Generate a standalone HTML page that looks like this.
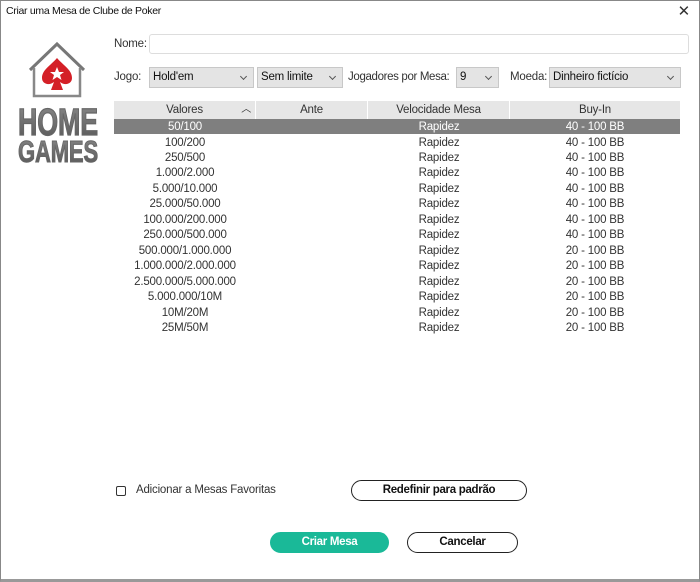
<!DOCTYPE html>
<html><head><style>
*{box-sizing:border-box;margin:0;padding:0}
body{width:700px;height:582px;background:#fff;font-family:"Liberation Sans",sans-serif;font-size:11.5px;letter-spacing:-0.2px;color:#222;position:relative;overflow:hidden}
.frame{position:absolute;left:0;top:0;width:700px;height:582px;border:1px solid #888;border-bottom:3px solid #999}
.abs{position:absolute}
.title{left:6px;top:5px;font-size:10.5px;color:#111;letter-spacing:-0.3px}
.close{right:10px;top:2px;font-size:15px;color:#333}
.lbl{font-size:11.5px;color:#333}
.sel{position:absolute;height:21px;background:#e4e4e4;border:1px solid #c8c8c8;font-size:11.5px;padding:3px 3px;color:#111}
.sel:after{content:"";position:absolute;right:7px;top:6px;width:4px;height:4px;border-right:1px solid #555;border-bottom:1px solid #555;transform:rotate(45deg)}
.hdr{position:absolute;top:101px;height:18px;background:#e6e6e6;text-align:center;font-size:11.5px;line-height:18px;color:#333;border-right:1px solid #fff}
.row{position:absolute;left:114px;width:566px;height:15.45px;font-size:11.5px;line-height:16px;color:#333}
.row span{position:absolute;text-align:center}
.c1{left:0;width:142px}.c3{left:254px;width:142px}.c4{left:396px;width:170px}
.sel0{background:#7f7f7f;color:#fff}
.btn{position:absolute;height:21px;border:1px solid #222;border-radius:11px;text-align:center;font-weight:bold;font-size:11.5px;line-height:19px;color:#111;background:#fff;letter-spacing:-0.3px}
</style></head><body>
<div class="frame"></div>
<div class="abs title">Criar uma Mesa de Clube de Poker</div>
<div class="abs close">✕</div>
<svg class="abs" style="left:14px;top:38px" width="88" height="128" viewBox="0 0 88 128">
<defs><linearGradient id="g" x1="0" y1="0" x2="0" y2="1"><stop offset="0" stop-color="#8a8a8a"/><stop offset="1" stop-color="#555"/></linearGradient></defs>
<path d="M16 32 L43 6 L70 32" fill="none" stroke="#777" stroke-width="3"/>
<path d="M20 30 V58 H66 V30" fill="none" stroke="#888" stroke-width="2.5"/>
<path d="M43 20 C36 28 28 32 28 40 C28 46 35 48 40 44 L37 52 H49 L46 44 C51 48 58 46 58 40 C58 32 50 28 43 20Z" fill="#d42027"/>
<path d="M43 29 l2 5 h5 l-4 3 l1.5 5 l-4.5 -3 l-4.5 3 l1.5 -5 l-4 -3 h5z" fill="#fff"/>
<text x="44" y="97" text-anchor="middle" font-family="Liberation Sans" font-weight="bold" font-size="38" fill="url(#g)" stroke="#666" stroke-width="1.2" textLength="80" lengthAdjust="spacingAndGlyphs">HOME</text>
<text x="44" y="124" text-anchor="middle" font-family="Liberation Sans" font-weight="bold" font-size="31" fill="url(#g)" stroke="#666" stroke-width="1" textLength="80" lengthAdjust="spacingAndGlyphs">GAMES</text>
</svg>
<div class="abs lbl" style="left:114px;top:38px">Nome:</div>
<div class="abs" style="left:149px;top:34px;width:540px;height:20px;border:1px solid #ddd;border-radius:3px"></div>
<div class="abs lbl" style="left:114px;top:71px">Jogo:</div>
<div class="sel" style="left:149px;top:67px;width:105px">Hold'em</div>
<div class="sel" style="left:257px;top:67px;width:86px">Sem limite</div>
<div class="abs lbl" style="left:348px;top:71px;letter-spacing:-0.35px">Jogadores por Mesa:</div>
<div class="sel" style="left:456px;top:67px;width:43px">9</div>
<div class="abs lbl" style="left:510px;top:71px">Moeda:</div>
<div class="sel" style="left:549px;top:67px;width:132px">Dinheiro fictício</div>
<div class="hdr" style="left:114px;width:142px">Valores<span style="position:absolute;right:4px;top:0;font-size:10px">︿</span></div>
<div class="hdr" style="left:256px;width:112px">Ante</div>
<div class="hdr" style="left:368px;width:142px">Velocidade Mesa</div>
<div class="hdr" style="left:510px;width:170px;border-right:0">Buy-In</div>
<div class="row sel0" style="top:119px"><span class="c1">50/100</span><span class="c3">Rapidez</span><span class="c4">40 - 100 BB</span></div>
<div class="row" style="top:134.5px"><span class="c1">100/200</span><span class="c3">Rapidez</span><span class="c4">40 - 100 BB</span></div>
<div class="row" style="top:150px"><span class="c1">250/500</span><span class="c3">Rapidez</span><span class="c4">40 - 100 BB</span></div>
<div class="row" style="top:165.4px"><span class="c1">1.000/2.000</span><span class="c3">Rapidez</span><span class="c4">40 - 100 BB</span></div>
<div class="row" style="top:180.9px"><span class="c1">5.000/10.000</span><span class="c3">Rapidez</span><span class="c4">40 - 100 BB</span></div>
<div class="row" style="top:196.3px"><span class="c1">25.000/50.000</span><span class="c3">Rapidez</span><span class="c4">40 - 100 BB</span></div>
<div class="row" style="top:211.8px"><span class="c1">100.000/200.000</span><span class="c3">Rapidez</span><span class="c4">40 - 100 BB</span></div>
<div class="row" style="top:227.2px"><span class="c1">250.000/500.000</span><span class="c3">Rapidez</span><span class="c4">40 - 100 BB</span></div>
<div class="row" style="top:242.7px"><span class="c1">500.000/1.000.000</span><span class="c3">Rapidez</span><span class="c4">20 - 100 BB</span></div>
<div class="row" style="top:258.1px"><span class="c1">1.000.000/2.000.000</span><span class="c3">Rapidez</span><span class="c4">20 - 100 BB</span></div>
<div class="row" style="top:273.6px"><span class="c1">2.500.000/5.000.000</span><span class="c3">Rapidez</span><span class="c4">20 - 100 BB</span></div>
<div class="row" style="top:289px"><span class="c1">5.000.000/10M</span><span class="c3">Rapidez</span><span class="c4">20 - 100 BB</span></div>
<div class="row" style="top:304.5px"><span class="c1">10M/20M</span><span class="c3">Rapidez</span><span class="c4">20 - 100 BB</span></div>
<div class="row" style="top:320px"><span class="c1">25M/50M</span><span class="c3">Rapidez</span><span class="c4">20 - 100 BB</span></div>
<div class="abs" style="left:116px;top:486px;width:10px;height:10px;border:1.5px solid #333;border-radius:2px"></div>
<div class="abs lbl" style="left:136px;top:484px">Adicionar a Mesas Favoritas</div>
<div class="btn" style="left:351px;top:480px;width:176px">Redefinir para padrão</div>
<div class="btn" style="left:270px;top:532px;width:119px;background:#1ab998;border-color:#1ab998;color:#fff">Criar Mesa</div>
<div class="btn" style="left:407px;top:532px;width:111px">Cancelar</div>
</body></html>
